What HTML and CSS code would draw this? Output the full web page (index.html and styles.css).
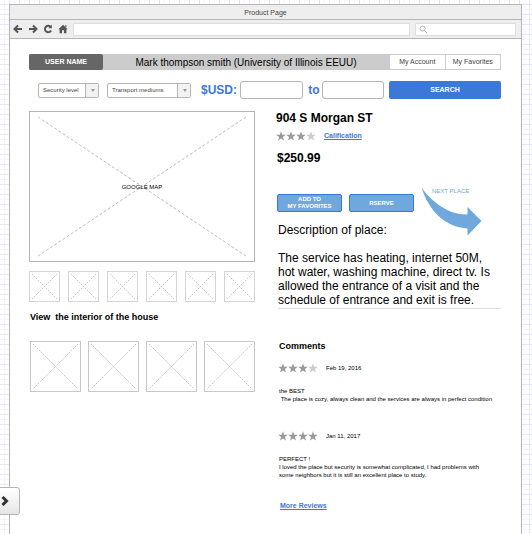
FILE: index.html
```html
<!DOCTYPE html>
<html lang="en">
<head>
<meta charset="utf-8">
<title>Product Page</title>
<link rel="stylesheet" href="styles.css">
</head>
<body>
<svg class="defs" aria-hidden="true">
  <symbol id="star" viewBox="0 0 10 10"><path d="M5 0.2 6.2 3.7H9.8L6.9 5.9 8 9.6 5 7.4 2 9.6 3.1 5.9 0.2 3.7H3.8Z"/></symbol>
</svg>
<div class="window">
  <div class="titlebar">Product Page</div>
  <div class="toolbar">
    <button class="tool" aria-label="Back"><svg viewBox="0 0 10 10"><path d="M9 5H2M5 1.5 1.5 5 5 8.5"/></svg></button>
    <button class="tool" aria-label="Forward"><svg viewBox="0 0 10 10"><path d="M1 5h7M5 1.5 8.500 5 5 8.500"/></svg></button>
    <button class="tool" aria-label="Reload"><svg viewBox="0 0 10 10"><path d="M7.800 3.200A3.200 3.200 0 1 0 8 6.500"/><path class="solid" d="M8.800 0.800V4.300H5.300Z"/></svg></button>
    <button class="tool" aria-label="Home"><svg viewBox="0 0 10 10"><path class="solid" d="M5 0.800 9.600 5.300H8.400V9.200H6V6.300H4V9.200H1.600V5.300H0.400L5 0.800ZM7.200 1.200H8.400V3.500L7.200 2.500Z"/></svg></button>
    <input class="address" type="text" aria-label="Address">
    <div class="find">
      <svg viewBox="0 0 10 10"><circle cx="4" cy="4" r="2.800"/><path d="M6 6 9 9"/></svg>
      <input type="search" aria-label="Find">
    </div>
  </div>
  <div class="page">
    <header class="userbar">
      <strong class="user-tag">USER NAME</strong>
      <span class="user-name">Mark thompson smith (University of Illinois EEUU)</span>
      <nav class="tabs"><a href="#account">My Account</a><a href="#favorites">My Favorites</a></nav>
    </header>
    <form class="filters">
      <div class="drop"><select class="security" aria-label="Security level"><option>Security level</option></select></div>
      <div class="drop"><select class="transport" aria-label="Transport mediums"><option>Transport mediums</option></select></div>
      <label class="price-label" for="min">$USD:</label>
      <input class="amount" id="min" type="text">
      <label class="to-label" for="max">to</label>
      <input class="amount" id="max" type="text">
      <button class="search" type="button">SEARCH</button>
    </form>
    <main class="columns">
      <section class="gallery">
        <div class="map">
          <svg viewBox="0 0 226 151" preserveAspectRatio="none"><path d="M8 5 218 146M218 5 8 146"/></svg>
          <span>GOOGLE MAP</span>
        </div>
        <div class="thumbs">
          <svg viewBox="0 0 31 31"><path d="M2 2 29 29M29 2 2 29"/></svg>
          <svg viewBox="0 0 31 31"><path d="M2 2 29 29M29 2 2 29"/></svg>
          <svg viewBox="0 0 31 31"><path d="M2 2 29 29M29 2 2 29"/></svg>
          <svg viewBox="0 0 31 31"><path d="M2 2 29 29M29 2 2 29"/></svg>
          <svg viewBox="0 0 31 31"><path d="M2 2 29 29M29 2 2 29"/></svg>
          <svg viewBox="0 0 31 31"><path d="M2 2 29 29M29 2 2 29"/></svg>
        </div>
        <h2>View&nbsp; the interior of the house</h2>
        <div class="rooms">
          <svg viewBox="0 0 51 51"><path d="M2 2 49 49M49 2 2 49"/></svg>
          <svg viewBox="0 0 51 51"><path d="M2 2 49 49M49 2 2 49"/></svg>
          <svg viewBox="0 0 51 51"><path d="M2 2 49 49M49 2 2 49"/></svg>
          <svg viewBox="0 0 51 51"><path d="M2 2 49 49M49 2 2 49"/></svg>
        </div>
      </section>
      <section class="details">
        <h1>904 S Morgan ST</h1>
        <div class="rating">
          <span class="stars"><svg><use href="#star"/></svg><svg><use href="#star"/></svg><svg><use href="#star"/></svg><svg class="off"><use href="#star"/></svg></span>
          <a class="link" href="#rating">Calification</a>
        </div>
        <p class="price">$250.99</p>
        <div class="actions">
          <button type="button">ADD TO<br>MY FAVORITES</button>
          <button type="button">RSERVE</button>
          <a class="next" href="#next">
            <svg viewBox="0 0 62 50"><path d="M0.500 0.500C10 14 27 28 46.500 27.500V20L60.500 34 46.500 48.500V41.500C24 40 8 24 0.500 0.500Z"/></svg>
            <span>NEXT PLACE</span>
          </a>
        </div>
        <div class="description">
          <h2>Description of place:</h2>
          <p>The service has heating, internet 50M,<br>hot water, washing machine, direct tv. Is<br>allowed the entrance of a visit and the<br>schedule of entrance and exit is free.</p>
        </div>
        <div class="comments">
          <h2>Comments</h2>
          <article>
            <div class="rating">
              <span class="stars"><svg><use href="#star"/></svg><svg><use href="#star"/></svg><svg><use href="#star"/></svg><svg class="off"><use href="#star"/></svg></span>
              <time>Feb 19, 2016</time>
            </div>
            <p>the BEST<br>&nbsp;The place is cozy, always clean and the services are always in perfect condition</p>
          </article>
          <article>
            <div class="rating">
              <span class="stars"><svg><use href="#star"/></svg><svg><use href="#star"/></svg><svg><use href="#star"/></svg><svg><use href="#star"/></svg></span>
              <time>Jan 11, 2017</time>
            </div>
            <p>PERFECT !<br>I loved the place but security is somewhat complicated, I had problems with<br>some neighbors but it is still an excellent place to study.</p>
          </article>
          <a class="link" href="#reviews">More Reviews</a>
        </div>
      </section>
    </main>
  </div>
</div>
<button class="drawer" aria-label="Open panel"><svg viewBox="0 0 8 10"><path d="M1.500 1 5.500 5 1.500 9"/></svg></button>
</body>
</html>
```
FILE: styles.css
```css
* { box-sizing: border-box; }
body {
  margin: 0;
  padding: 4px 10px 0 9px;
  min-height: 100vh;
  display: flex;
  font-family: "Liberation Sans", Arial, sans-serif;
  font-size: 6px;
  line-height: 8px;
  color: #000;
  background-color: #fff;
  background-image:
    linear-gradient(#e6e6fb 1px, transparent 1px),
    linear-gradient(90deg, #e6e6fb 1px, transparent 1px),
    linear-gradient(#f4f4fe 1px, transparent 1px),
    linear-gradient(90deg, #f4f4fe 1px, transparent 1px);
  background-size: 10px 10px, 10px 10px, 5px 5px, 5px 5px;
  background-position: 0 4px, 9px 0, 0 4px, 4px 0;
}
h1, h2, p { margin: 0; }
button, input, select { font: inherit; margin: 0; padding: 0; }
a { text-decoration: none; color: inherit; }
svg { display: block; }
.defs { position: absolute; width: 0; height: 0; }

.window {
  flex: 1;
  min-width: 0;
  border: 1px solid #b5b5b5;
  border-bottom: 0;
  background: #fff;
}
.titlebar {
  height: 15px;
  line-height: 15px;
  font-size: 7px;
  text-align: center;
  color: #444;
  background: #eee;
  border-bottom: 1px solid #b5b5b5;
}
.toolbar {
  height: 19px;
  display: flex;
  align-items: center;
  gap: 5px;
  padding: 0 5px 0 3px;
  background: #eee;
  border-bottom: 1px solid #b5b5b5;
}
.tool { width: 10px; height: 10px; border: 0; background: none; }
.tool svg { width: 10px; height: 10px; fill: none; stroke: #555; stroke-width: 2; }
.tool .solid { fill: #555; stroke: none; }
.address, .find {
  height: 13px;
  border: 1px solid #ddd;
  background: #fff;
}
.address { flex: 1; min-width: 0; }
.find { width: 101px; display: flex; align-items: center; padding-left: 3px; }
.find svg { width: 9px; height: 9px; fill: none; stroke: #aaa; stroke-width: 1; }
.find input { flex: 1; min-width: 0; border: 0; background: none; outline: 0; }

.page { padding: 15px 20px 0 19px; }
.userbar { display: flex; height: 16px; line-height: 16px; background: #ccc; }
.user-tag {
  width: 74px;
  font-size: 7px;
  text-align: center;
  color: #fff;
  background: #666;
  border-radius: 2px;
}
.user-name { flex: 1; font-size: 10px; line-height: 18px; text-align: center; }
.tabs {
  display: flex;
  width: 112px;
  font-size: 7px;
  line-height: 14px;
  color: #444;
  text-align: center;
  background: #fff;
  border: 1px solid #ccc;
  border-radius: 2px;
}
.tabs a { flex: 1; }
.tabs a + a { border-left: 1px solid #ccc; }

.filters { display: flex; align-items: center; height: 18px; margin: 11px 0 12px; padding-left: 9px; }
.drop { position: relative; margin-right: 8px; }
.drop select {
  display: block;
  height: 15px;
  padding-left: 4px;
  appearance: none;
  color: #444;
  background: #fff;
  border: 1px solid #b5b5b5;
  border-radius: 2px;
}
.drop .security { width: 61px; }
.drop .transport { width: 84px; }
.drop::before {
  content: "";
  position: absolute;
  inset: 1px 1px 1px auto;
  width: 12px;
  background: #f2f2f2;
  border-left: 1px solid #b5b5b5;
  pointer-events: none;
}
.drop::after {
  content: "";
  position: absolute;
  right: 4px;
  top: 6px;
  border: 2px solid transparent;
  border-top: 3px solid #999;
  border-bottom: 0;
  pointer-events: none;
}
.price-label, .to-label { font-size: 12px; line-height: 14px; font-weight: bold; color: #3c78d8; }
.price-label { width: 41px; padding-left: 2px; }
.to-label { width: 19px; text-align: center; padding-left: 4px; }
.amount { flex: 1; min-width: 0; height: 18px; border: 1px solid #b5b5b5; border-radius: 3px; }
.search {
  width: 112px;
  height: 18px;
  margin-left: 5px;
  font-size: 7px;
  font-weight: bold;
  color: #fff;
  background: #3c78d8;
  border: 0;
  border-radius: 2px;
}

.columns {
  display: grid;
  grid-template-columns: minmax(0, 226fr) minmax(0, 225fr);
  column-gap: 21px;
}
.map { position: relative; border: 1px solid #b5b5b5; }
.map svg { width: 100%; height: 149px; fill: none; stroke: #bbb; stroke-dasharray: 3 2; }
.map span { position: absolute; inset: 71px 0 auto; text-align: center; }
.thumbs, .rooms { display: grid; }
.thumbs { grid-template-columns: repeat(6, 1fr); gap: 8px; margin-top: 9px; }
.rooms { grid-template-columns: repeat(4, 1fr); gap: 7px; padding-left: 1px; }
.thumbs svg, .rooms svg { width: 100%; fill: none; stroke: #c8c8c8; stroke-dasharray: 2 1; }
.thumbs svg { border: 1px solid #d4d4d4; }
.rooms svg { border: 1px solid #c8c8c8; }
.gallery h2 { margin: 8px 0 17px 1px; font-size: 9px; line-height: 14px; }

.details h1, .price { font-size: 12px; line-height: 14px; font-weight: bold; }
.rating { display: flex; align-items: center; gap: 8px; height: 10px; }
.details > .rating { margin: 6px 0 10px; }
.stars { display: flex; }
.stars svg { width: 10px; height: 10px; fill: #999; }
.stars .off { fill: #ccc; }
.link { font-size: 7px; color: #3c78d8; font-weight: bold; text-decoration: underline; }
.price, .actions { padding-left: 1px; }
.actions { position: relative; display: flex; gap: 7px; margin: 29px 0 11px; }
.actions button {
  width: 65px;
  height: 18px;
  line-height: 7px;
  font-weight: bold;
  color: #fff;
  background: #6fa8dc;
  border: 1px solid #3c78d8;
  border-radius: 2px;
}
.next { position: absolute; left: 145px; top: -7px; color: #6fa8dc; }
.next svg { width: 62px; height: 50px; fill: #6fa8dc; }
.next span { position: absolute; left: 11px; top: 0; white-space: nowrap; }
.description {
  margin-left: 2px;
  padding-bottom: 1px;
  font-size: 12px;
  line-height: 14px;
  border-bottom: 1px solid #ddd;
}
.description h2 { margin-bottom: 14px; font-size: 12px; font-weight: normal; }
.description p { white-space: nowrap; }
.comments { padding: 30px 0 0 2px; }
.comments h2 { margin: 0 0 10px 1px; font-size: 9px; line-height: 14px; }
.comments article { margin-bottom: 28px; }
.comments article p { margin: 14px 0 0 1px; white-space: nowrap; }
.comments article:last-of-type { margin-bottom: 23px; }
.comments .link { margin-left: 2px; }

.drawer {
  position: fixed;
  left: -3px;
  bottom: 19px;
  width: 23px;
  height: 28px;
  padding-left: 3px;
  background: linear-gradient(#fff, #e6e6e6);
  border: 1px solid #b5b5b5;
  border-radius: 3px;
}
.drawer svg { width: 8px; height: 10px; fill: none; stroke: #333; stroke-width: 3; }
```
